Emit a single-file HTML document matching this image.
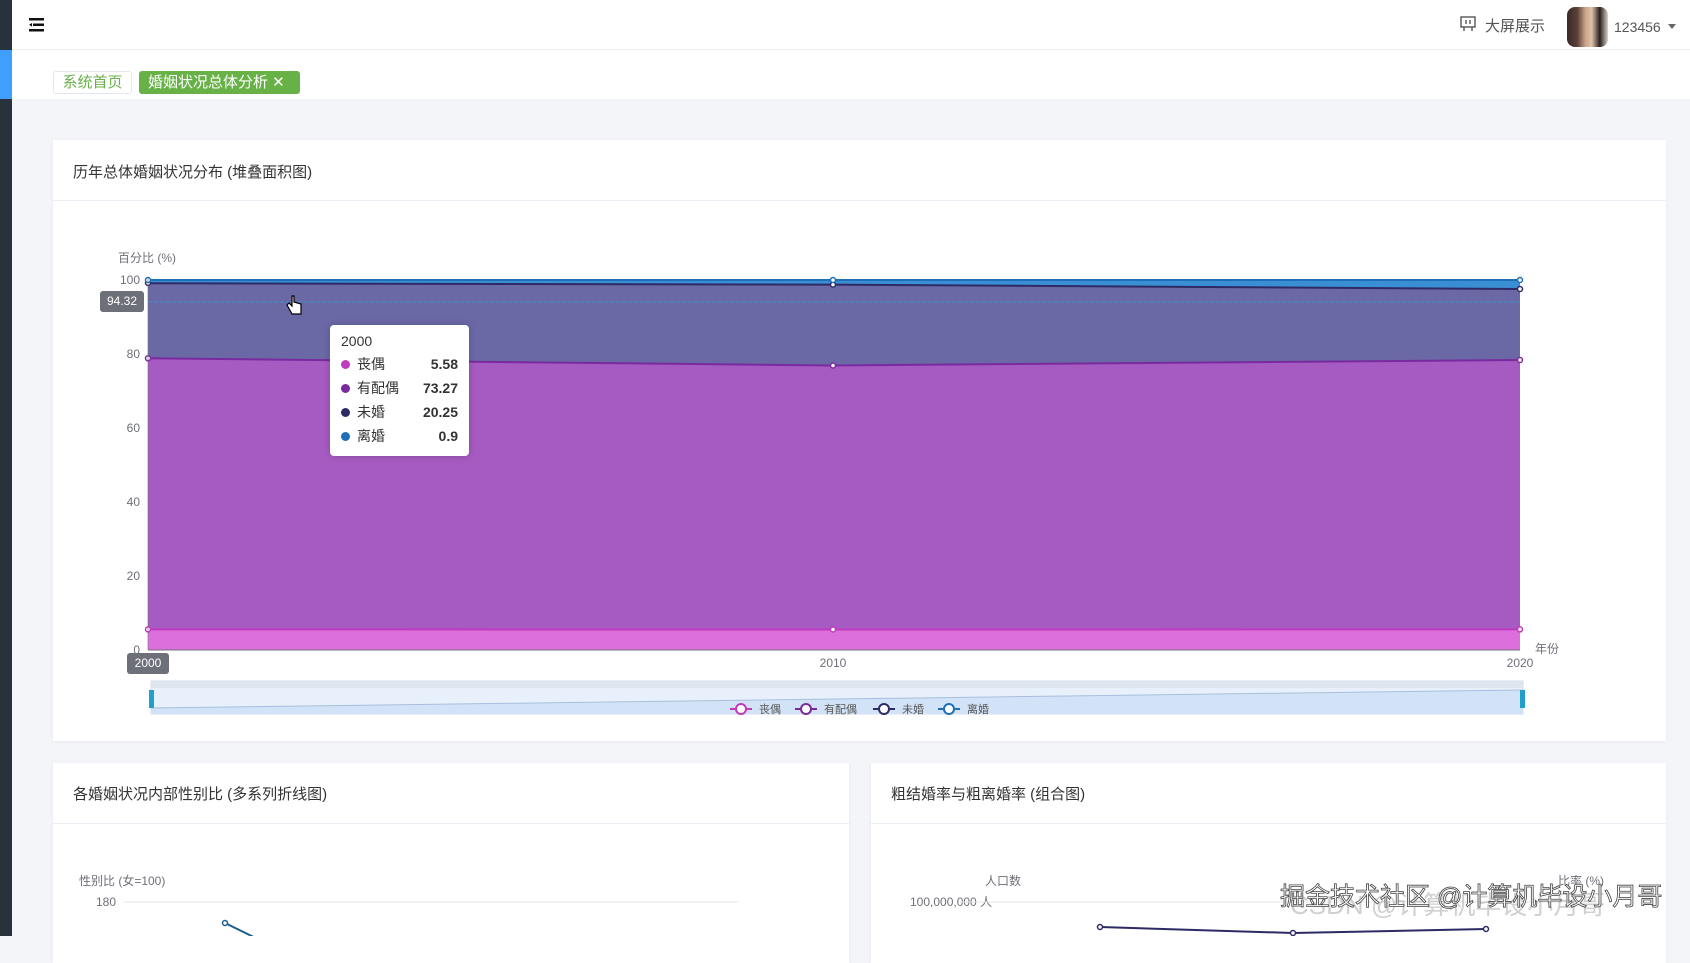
<!DOCTYPE html>
<html><head><meta charset="utf-8"><style>
*{margin:0;padding:0;box-sizing:border-box}
body{width:1690px;height:936px;overflow:hidden;background:#f3f5f8;font-family:"Liberation Sans","Noto Sans CJK SC",sans-serif;position:relative;color:#333}
.abs{position:absolute}
.card{position:absolute;background:#fff;box-shadow:0 1px 4px rgba(0,0,0,.05)}
.ct{position:absolute;left:20px;font-size:15px;color:#333}
.dv{position:absolute;left:0;right:0;height:1px;background:#ebeef5}
</style></head><body>
<div class="abs" style="left:0;top:0;width:12px;height:936px;background:#28323d"></div>
<div class="abs" style="left:0;top:50px;width:12px;height:49px;background:#409eff"></div>
<div class="abs" style="left:12px;top:0;width:1678px;height:50px;background:#fff;border-bottom:1px solid #eef0f3"></div>
<div class="abs" style="left:12px;top:50px;width:1678px;height:49px;background:#fff"></div>
<svg class="abs" style="left:29px;top:18px" width="16" height="14"><rect x="0" y="0" width="15" height="2.5" fill="#111"/><rect x="4" y="5.5" width="11" height="2.5" fill="#111"/><rect x="0" y="11" width="15" height="2.5" fill="#111"/><path d="M0 6.8 L3 5 L3 8.6Z" fill="#111"/></svg>
<svg class="abs" style="left:1460px;top:16px" width="16" height="16" fill="none" stroke="#555" stroke-width="1.4"><rect x="1" y="1" width="14" height="10"/><path d="M4 11v4M12 11v4M6 4v4M10 4v4"/></svg>
<div class="abs" style="left:1485px;top:15px;font-size:15px;color:#555">大屏展示</div>
<div class="abs" style="left:1567px;top:7px;width:41px;height:40px;border-radius:8px;background:linear-gradient(90deg,#3a2a28 0,#5a4038 25%,#c9a58a 45%,#e0c4aa 60%,#2b2020 80%,#d8d4c8 100%)"></div>
<div class="abs" style="left:1614px;top:19px;font-size:14px;color:#555">123456</div>
<div class="abs" style="left:1668px;top:24px;width:0;height:0;border-left:4px solid transparent;border-right:4px solid transparent;border-top:5px solid #666"></div>
<div class="abs" style="left:53px;top:71px;width:79px;height:23px;border:1px solid #e4e7ed;border-radius:3px;font-size:15px;color:#6ab04c;text-align:center;line-height:21px;background:#fff">系统首页</div>
<div class="abs" style="left:139px;top:71px;width:161px;height:23px;border-radius:3px;font-size:15px;color:#fff;background:#67b146;line-height:23px;padding-left:9px">婚姻状况总体分析 ✕</div>

<div class="card" style="left:53px;top:140px;width:1613px;height:601px">
<div class="ct" style="top:21px">历年总体婚姻状况分布 (堆叠面积图)</div>
<div class="dv" style="top:60px"></div>
</div>
<svg class="abs" style="left:0;top:0" width="1690" height="760" font-family="Liberation Sans,Noto Sans CJK SC,sans-serif">
<g stroke="#e5e5e5"><line x1="148" y1="576" x2="1520" y2="576"/><line x1="148" y1="502" x2="1520" y2="502"/><line x1="148" y1="428" x2="1520" y2="428"/><line x1="148" y1="354" x2="1520" y2="354"/></g>
<path d="M148 280 L833 280 L1520 280 L1520 650 L148 650Z" fill="#3a8ed3"/>
<path d="M148 283.3 L833 284.6 L1520 289 L1520 650 L148 650Z" fill="#6a69a6"/>
<path d="M148 358.3 L833 365.5 L1520 360 L1520 650 L148 650Z" fill="#a65bc2"/>
<path d="M148 629.4 L833 629.5 L1520 629.4 L1520 650 L148 650Z" fill="#dd6fdc"/>
<g fill="none" stroke-width="2"><path d="M148 280 L833 280 L1520 280" stroke="#1f6fb8"/><path d="M148 283.3 L833 284.6 L1520 289" stroke="#2e2a66"/><path d="M148 358.3 L833 365.5 L1520 360" stroke="#7a2a9f"/><path d="M148 629.4 L833 629.5 L1520 629.4" stroke="#c03ac0"/></g>
<g fill="#fff" stroke-width="1.5"><circle cx="148" cy="358.3" r="2.5" stroke="#7a2a9f"/><circle cx="833" cy="365.5" r="2.5" stroke="#7a2a9f"/><circle cx="1520" cy="360" r="2.5" stroke="#7a2a9f"/><circle cx="148" cy="629.4" r="2.5" stroke="#c03ac0"/><circle cx="833" cy="629.5" r="2.5" stroke="#c03ac0"/><circle cx="1520" cy="629.4" r="2.5" stroke="#c03ac0"/><circle cx="148" cy="283" r="2.5" stroke="#2e2a66"/><circle cx="833" cy="284.6" r="2.5" stroke="#2e2a66"/><circle cx="1520" cy="289" r="2.5" stroke="#2e2a66"/><circle cx="148" cy="280" r="2.5" stroke="#1f6fb8"/><circle cx="833" cy="280" r="2.5" stroke="#1f6fb8"/><circle cx="1520" cy="280" r="2.5" stroke="#1f6fb8"/></g>
<line x1="148" y1="302" x2="1520" y2="302" stroke="#3a8ed3" stroke-dasharray="4 2"/>
<line x1="148" y1="650" x2="1520" y2="650" stroke="#6e7079"/>
<line x1="148" y1="278" x2="148" y2="650" stroke="#6e7079" stroke-width="0.6"/>
<g font-size="12" fill="#6e7079" text-anchor="end"><text x="140" y="284">100</text><text x="140" y="358">80</text><text x="140" y="432">60</text><text x="140" y="506">40</text><text x="140" y="580">20</text><text x="140" y="654">0</text></g>
<text x="118" y="262" font-size="12" fill="#6e7079">百分比 (%)</text>
<rect x="100" y="291" width="44" height="21" rx="3" fill="#6e7079"/><text x="122" y="305" font-size="12" fill="#fff" text-anchor="middle">94.32</text>
<rect x="127" y="653" width="42" height="21" rx="3" fill="#6e7079"/><text x="148" y="667" font-size="12" fill="#fff" text-anchor="middle">2000</text>
<g font-size="12" fill="#6e7079" text-anchor="middle"><text x="833" y="667">2010</text><text x="1520" y="667">2020</text></g>
<text x="1535" y="653" font-size="12" fill="#6e7079">年份</text>
<rect x="151" y="681" width="1372" height="33" fill="#e8f0fb" stroke="#d4dde9"/>
<rect x="151" y="681" width="1372" height="7" fill="#dde5ef"/>
<path d="M151 708 L1523 690 L1523 714 L151 714Z" fill="#d3e3f7"/><path d="M151 708 L1523 690" stroke="#a8bfdd"/>
<rect x="149" y="690" width="5" height="18" fill="#20a0c8"/><rect x="1520" y="690" width="5" height="18" fill="#20a0c8"/>
<g font-size="11" fill="#555"><line x1="730" y1="709" x2="752" y2="709" stroke="#c03ac0" stroke-width="2"/><circle cx="741" cy="709" r="5" fill="#fff" stroke="#c03ac0" stroke-width="2"/><text x="759" y="713">丧偶</text>
<line x1="795" y1="709" x2="817" y2="709" stroke="#7a2a9f" stroke-width="2"/><circle cx="806" cy="709" r="5" fill="#fff" stroke="#7a2a9f" stroke-width="2"/><text x="824" y="713">有配偶</text>
<line x1="873" y1="709" x2="895" y2="709" stroke="#2e2a66" stroke-width="2"/><circle cx="884" cy="709" r="5" fill="#fff" stroke="#2e2a66" stroke-width="2"/><text x="902" y="713">未婚</text>
<line x1="938" y1="709" x2="960" y2="709" stroke="#1f6fb8" stroke-width="2"/><circle cx="949" cy="709" r="5" fill="#fff" stroke="#1f6fb8" stroke-width="2"/><text x="967" y="713">离婚</text></g>
<path d="M292 296 v10 l-3 -3 l-2 2 l5 9 h9 v-10 l-7 -2 v-6z" fill="#fff" stroke="#000" stroke-width="1.2"/>
</svg>
<div class="abs" style="left:330px;top:325px;width:139px;height:131px;background:#fff;border-radius:4px;box-shadow:0 0 8px rgba(0,0,0,.2);font-size:14px;padding:8px 11px;font-family:'Liberation Sans','Noto Sans CJK SC',sans-serif">
<div style="color:#333;margin-bottom:3px">2000</div>
<div style="height:24px;line-height:24px"><span style="display:inline-block;width:9px;height:9px;border-radius:50%;background:#c03ac0;margin-right:7px"></span>丧偶<b style="float:right">5.58</b></div>
<div style="height:24px;line-height:24px"><span style="display:inline-block;width:9px;height:9px;border-radius:50%;background:#7a2a9f;margin-right:7px"></span>有配偶<b style="float:right">73.27</b></div>
<div style="height:24px;line-height:24px"><span style="display:inline-block;width:9px;height:9px;border-radius:50%;background:#2e2a66;margin-right:7px"></span>未婚<b style="float:right">20.25</b></div>
<div style="height:24px;line-height:24px"><span style="display:inline-block;width:9px;height:9px;border-radius:50%;background:#1f6fb8;margin-right:7px"></span>离婚<b style="float:right">0.9</b></div>
</div>

<div class="card" style="left:53px;top:763px;width:796px;height:200px">
<div class="ct" style="top:20px">各婚姻状况内部性别比 (多系列折线图)</div>
<div class="dv" style="top:60px"></div>
</div>
<div class="card" style="left:871px;top:763px;width:795px;height:200px">
<div class="ct" style="top:20px">粗结婚率与粗离婚率 (组合图)</div>
<div class="dv" style="top:60px"></div>
</div>
<svg class="abs" style="left:0;top:860px" width="1690" height="76" font-family="Liberation Sans,Noto Sans CJK SC,sans-serif">
<text x="79" y="25" font-size="12" fill="#6e7079">性别比 (女=100)</text>
<text x="116" y="46" font-size="12" fill="#6e7079" text-anchor="end">180</text>
<line x1="124" y1="42" x2="738" y2="42" stroke="#e5e5e5"/>
<path d="M225 63 L270 85" stroke="#1f5f8f" stroke-width="2"/><circle cx="225" cy="63" r="2.5" fill="#fff" stroke="#1f5f8f" stroke-width="1.5"/>
<text x="985" y="25" font-size="12" fill="#6e7079">人口数</text>
<text x="910" y="46" font-size="12" fill="#6e7079">100,000,000 人</text>
<line x1="960" y1="42" x2="1600" y2="42" stroke="#e5e5e5"/>
<text x="1558" y="25" font-size="12" fill="#6e7079">比率 (%)</text>
<path d="M1100 67 L1293 73 L1486 69" stroke="#2e2a66" stroke-width="2" fill="none"/>
<g fill="#fff" stroke="#2e2a66" stroke-width="1.5"><circle cx="1100" cy="67" r="2.5"/><circle cx="1293" cy="73" r="2.5"/><circle cx="1486" cy="69" r="2.5"/></g>
<text x="1290" y="54" font-size="26" fill="rgba(120,120,120,.35)">CSDN @计算机毕设小月哥</text>
<text x="1280" y="45" font-size="25" fill="#fff" stroke="#444" stroke-width="0.8">掘金技术社区 @计算机毕设小月哥</text>
</svg>
</body></html>
